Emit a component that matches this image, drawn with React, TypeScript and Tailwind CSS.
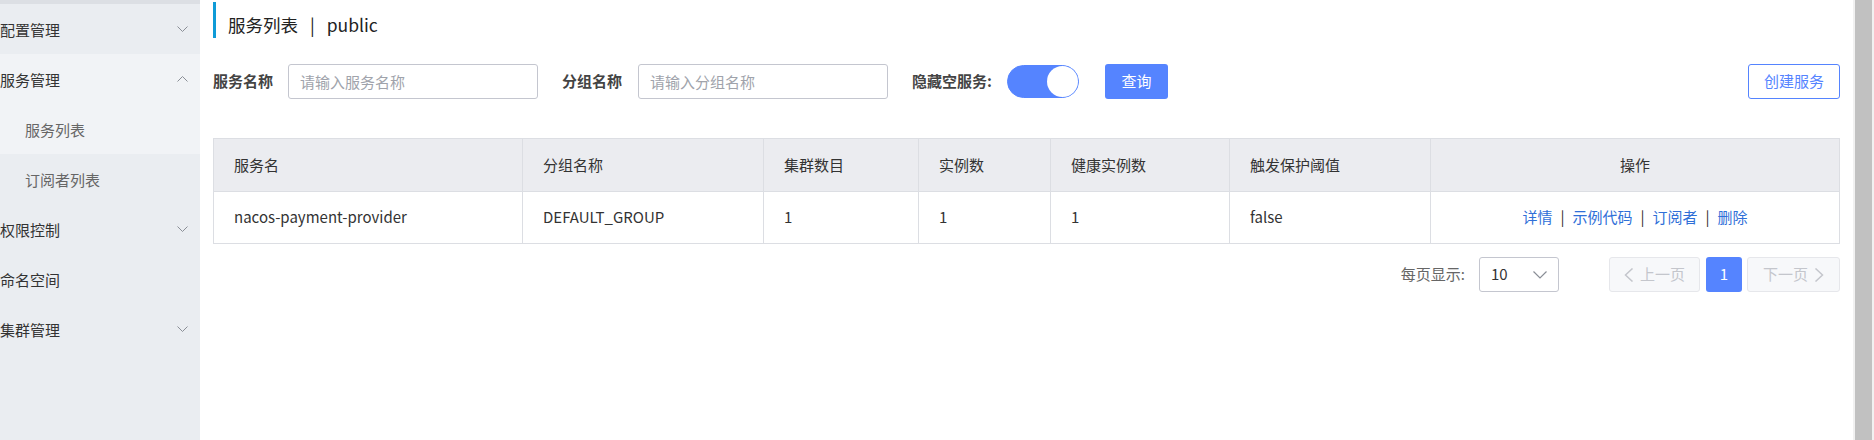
import React from 'react'

const font = { fontFamily: '"Noto Sans CJK SC", "Noto Sans", sans-serif' }

const menu = [
  { label: '配置管理', arrow: 'down', light: false },
  { label: '服务管理', arrow: 'up', light: true },
  { label: '服务列表', sub: true, light: true },
  { label: '订阅者列表', sub: true, light: false },
  { label: '权限控制', arrow: 'down', light: false },
  { label: '命名空间', light: false },
  { label: '集群管理', arrow: 'down', light: false },
]

const columns = [
  { title: '服务名', width: 309 },
  { title: '分组名称', width: 241 },
  { title: '集群数目', width: 155 },
  { title: '实例数', width: 132 },
  { title: '健康实例数', width: 179 },
  { title: '触发保护阈值', width: 201 },
]

const row = ['nacos-payment-provider', 'DEFAULT_GROUP', '1', '1', '1', 'false']

function Chevron({ dir }: { dir: 'up' | 'down' }) {
  return (
    <svg width="11" height="6" viewBox="0 0 11 6" fill="none">
      <polyline
        points={dir === 'down' ? '0.5,0.5 5.5,5.5 10.5,0.5' : '0.5,5.5 5.5,0.5 10.5,5.5'}
        stroke="#8a8e96"
        strokeWidth="1"
      />
    </svg>
  )
}

function Sidebar() {
  return (
    <aside className="w-[200px] shrink-0 bg-[#eaedf1]">
      <div className="h-[4px] bg-[#dcdfe4]" />
      {menu.map(item => (
        <div
          key={item.label}
          className={`h-[50px] flex items-center justify-between pr-[12px] ${
            item.light ? 'bg-[#f1f3f6]' : ''
          } ${item.sub ? 'pl-[25px] text-[#666]' : 'text-[#333]'}`}
        >
          <span className="text-[15px] leading-none">{item.label}</span>
          {item.arrow && <Chevron dir={item.arrow as 'up' | 'down'} />}
        </div>
      ))}
    </aside>
  )
}

function SearchBar() {
  return (
    <div className="mt-[26px] flex items-center h-[35px]">
      <label className="text-[15px] font-bold text-[#444]">服务名称</label>
      <input
        placeholder="请输入服务名称"
        className="ml-[15px] w-[250px] h-[35px] border border-[#c4c6cf] rounded-[3px] px-[11px] text-[15px] placeholder:text-[#a0a3ab] outline-none"
      />
      <label className="ml-[24px] text-[15px] font-bold text-[#444]">分组名称</label>
      <input
        placeholder="请输入分组名称"
        className="ml-[16px] w-[250px] h-[35px] border border-[#c4c6cf] rounded-[3px] px-[11px] text-[15px] placeholder:text-[#a0a3ab] outline-none"
      />
      <label className="ml-[24px] text-[15px] font-bold text-[#444]">隐藏空服务:</label>
      <div className="ml-[15px] w-[72px] h-[33px] rounded-full bg-[#5584ff] border border-[#5584ff] flex items-center justify-end">
        <div className="w-[31px] h-[31px] rounded-full bg-white" />
      </div>
      <button className="ml-[26px] w-[63px] h-[35px] rounded-[3px] bg-[#5584ff] text-white text-[15px]">
        查询
      </button>
      <div className="flex-1" />
      <button className="w-[92px] h-[35px] rounded-[3px] border border-[#5584ff] text-[#5584ff] text-[15px] bg-white">
        创建服务
      </button>
    </div>
  )
}

function ServiceTable() {
  const actions = ['详情', '示例代码', '订阅者', '删除']
  return (
    <table className="mt-[39px] w-full table-fixed border-collapse text-[15px] text-[#333]">
      <colgroup>
        {columns.map(c => (
          <col key={c.title} style={{ width: c.width }} />
        ))}
        <col />
      </colgroup>
      <thead>
        <tr className="h-[53px] bg-[#ebecf0]">
          {columns.map(c => (
            <th key={c.title} className="border border-[#dcdee3] pl-[20px] text-left font-normal">
              {c.title}
            </th>
          ))}
          <th className="border border-[#dcdee3] text-center font-normal">操作</th>
        </tr>
      </thead>
      <tbody>
        <tr className="h-[52px]">
          {row.map((v, i) => (
            <td key={i} className="border border-[#dcdee3] pl-[20px]">
              {v}
            </td>
          ))}
          <td className="border border-[#dcdee3] text-center">
            {actions.map((a, i) => (
              <span key={a}>
                {i > 0 && <span className="mx-[8px] text-[#333]">|</span>}
                <a className="text-[#2f6fd8] cursor-pointer">{a}</a>
              </span>
            ))}
          </td>
        </tr>
      </tbody>
    </table>
  )
}

function Pagination() {
  return (
    <div className="mt-[13px] flex items-center justify-end h-[35px]">
      <span className="text-[15px] text-[#666]">每页显示:</span>
      <div className="ml-[14px] w-[80px] h-[35px] border border-[#c4c6cf] rounded-[3px] flex items-center justify-between pl-[11px] pr-[11px]">
        <span className="text-[15px] text-[#333]">10</span>
        <svg width="14" height="8" viewBox="0 0 14 8" fill="none">
          <polyline points="0.5,0.5 7,7 13.5,0.5" stroke="#8a8e96" strokeWidth="1.2" />
        </svg>
      </div>
      <button className="ml-[50px] w-[91px] h-[35px] rounded-[3px] border border-[#e6e7eb] bg-[#f7f8fa] text-[#c4c6cc] text-[15px] flex items-center justify-center gap-[6px]">
        <svg width="10" height="14" viewBox="0 0 10 14" fill="none">
          <polyline points="8.5,0.5 1.5,7 8.5,13.5" stroke="#c4c6cc" strokeWidth="1.5" />
        </svg>
        上一页
      </button>
      <button className="ml-[6px] w-[36px] h-[35px] rounded-[3px] bg-[#5584ff] text-white text-[15px]">1</button>
      <button className="ml-[5px] w-[93px] h-[35px] rounded-[3px] border border-[#e6e7eb] bg-[#f7f8fa] text-[#c4c6cc] text-[15px] flex items-center justify-center gap-[6px]">
        下一页
        <svg width="10" height="14" viewBox="0 0 10 14" fill="none">
          <polyline points="1.5,0.5 8.5,7 1.5,13.5" stroke="#c4c6cc" strokeWidth="1.5" />
        </svg>
      </button>
    </div>
  )
}

export default function App() {
  return (
    <div className="flex h-[440px] w-[1874px] bg-white overflow-hidden" style={font}>
      <Sidebar />
      <main className="flex-1 px-[13px]">
        <div className="mt-[2px] h-[36px] border-l-[3px] border-[#0f9bd7] pl-[12px] pt-[11px] flex items-center">
          <span className="text-[17.5px] text-[#222]">
            服务列表<span className="mx-[12px]">|</span>public
          </span>
        </div>
        <SearchBar />
        <ServiceTable />
        <Pagination />
      </main>
      <div className="w-[21px] shrink-0 bg-[#f1f1f1] pl-[2px] pr-[2px]">
        <div className="h-full bg-[#c1c1c1]" />
      </div>
    </div>
  )
}
